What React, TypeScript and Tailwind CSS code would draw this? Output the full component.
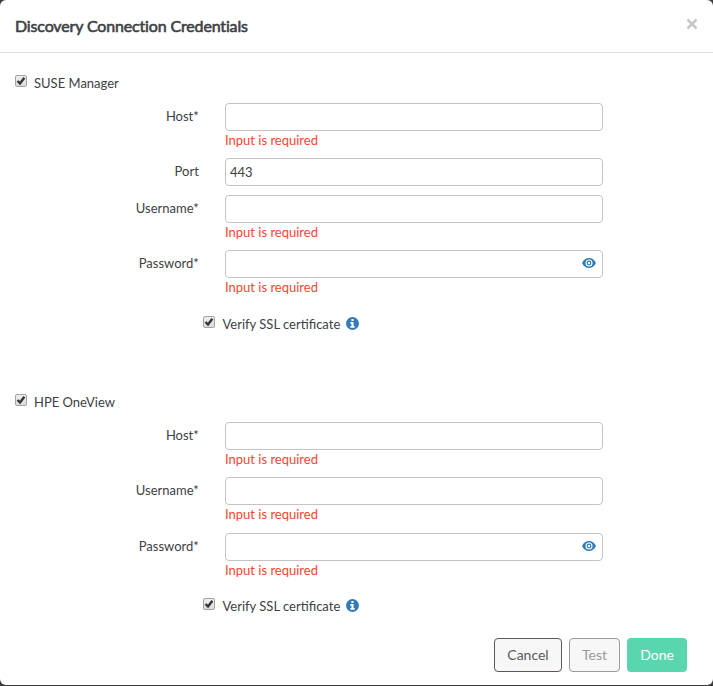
function Checkbox() {
  return (
    <span className="block h-3 w-3 shrink-0 rounded-[2px] border border-[#a3a3a3] bg-linear-to-b from-[#eeeeee] to-[#dcdcdc]">
      <svg viewBox="0 0 10 10" className="block h-[10px] w-[10px]">
        <path d="M1.5 5 L4 7.400 L8.400 1.700" fill="none" stroke="#363636" strokeWidth="2.400" />
      </svg>
    </span>
  );
}

function Info() {
  return (
    <svg viewBox="0 0 12 12" className="mt-[2px] ml-[5.500px] h-[13px] w-[13px]">
      <circle cx="6" cy="6" r="6" fill="#337ab7" />
      <path d="M5 1.800h2v1.800H5zM4 4.600h3v3.800h1V10H4V8.400h1V6.200H4z" fill="#fff" />
    </svg>
  );
}

function Eye() {
  return (
    <svg viewBox="0 0 14 10" className="mb-[2px] h-[10px] w-[14px]">
      <path d="M0 5C1.6 1.600 4.1 0 7 0s5.400 1.600 7 5c-1.600 3.400-4.100 5-7 5S1.600 8.400 0 5z" fill="#337ab7" />
      <circle cx="7" cy="5" r="3.5" fill="#fff" />
      <circle cx="7" cy="5" r="2.400" fill="#337ab7" />
      <circle cx="7" cy="5" r="1.200" fill="#fff" />
    </svg>
  );
}

type FieldProps = { label: string; value?: string; required?: boolean; secret?: boolean; tall?: boolean };

function Field({ label, value, required = true, secret, tall }: FieldProps) {
  return (
    <div className={`flex ${required ? (tall ? "h-14" : "h-[55px]") : "h-[37px]"}`}>
      <label className="w-[198.800px] pt-[4px] text-right leading-[18px]">{label}</label>
      <div className="ml-[26.200px] w-[378px]">
        <div className="flex h-7 items-center justify-between rounded-[4px] border border-[#c4c4c4] bg-white pr-[6px] pl-1">
          <span className="pt-[2px]">{value}</span>
          {secret && <Eye />}
        </div>
        {required && <p className="leading-[18px] text-[#fa4530]">Input is required</p>}
      </div>
    </div>
  );
}

function Verify() {
  return (
    <div className="flex h-[18px] pl-[203px]">
      <div className="pt-px"><Checkbox /></div>
      <span className="ml-[7.500px] leading-[18px]">Verify SSL certificate</span>
      <Info />
    </div>
  );
}

function Heading({ children }: { children: string }) {
  return (
    <div className="flex h-7 pl-[15px]">
      <div><Checkbox /></div>
      <span className="ml-[7px] leading-[17px]">{children}</span>
    </div>
  );
}

export default function App() {
  return (
    <div className="h-[686px] w-[713px] overflow-hidden bg-[#3b3c3d] font-['Lato',sans-serif] text-[13px] text-[#3d4144]">
      <div className="flex h-[685px] flex-col rounded-[6px] bg-white">
        <header className="flex h-[53px] shrink-0 items-center justify-between border-b border-[#e0e0e0] pr-[15px] pl-[15px]">
          <h1 className="text-[16px] font-normal tracking-[-0.15px] [-webkit-text-stroke:0.6px_currentColor]">Discovery Connection Credentials</h1>
          <svg viewBox="0 0 12 12" className="mb-[4px] h-3 w-3">
            <path d="M1.500 1.500L10.500 10.500M10.500 1.500L1.500 10.500" stroke="#c8c8c8" strokeWidth="2.500" />
          </svg>
        </header>
        <section className="h-[319px] shrink-0 pt-[22px]">
          <Heading>SUSE Manager</Heading>
          <Field label="Host*" />
          <Field label="Port" value="443" required={false} />
          <Field label="Username*" />
          <Field label="Password*" secret />
          <div className="mt-[10px]"><Verify /></div>
        </section>
        <section className="h-[266px] shrink-0 pt-[22px]">
          <Heading>HPE OneView</Heading>
          <Field label="Host*" />
          <Field label="Username*" tall />
          <Field label="Password*" secret />
          <div className="mt-[9px]"><Verify /></div>
        </section>
        <footer className="flex h-[34px] shrink-0 justify-end gap-[7px] pr-[26px] text-[14px]">
          <button className="w-[68px] rounded-[4px] border border-[#58595b] bg-[#f7f7f7] pb-[2px] text-[#58595b]">Cancel</button>
          <button className="w-[51px] rounded-[4px] border border-[#9a9a9b] bg-[#f7f7f7] pb-[2px] text-[#9a9a9b]">Test</button>
          <button className="w-[60px] rounded-[4px] bg-[#59d6ae] pb-[2px] text-white">Done</button>
        </footer>
      </div>
    </div>
  );
}
